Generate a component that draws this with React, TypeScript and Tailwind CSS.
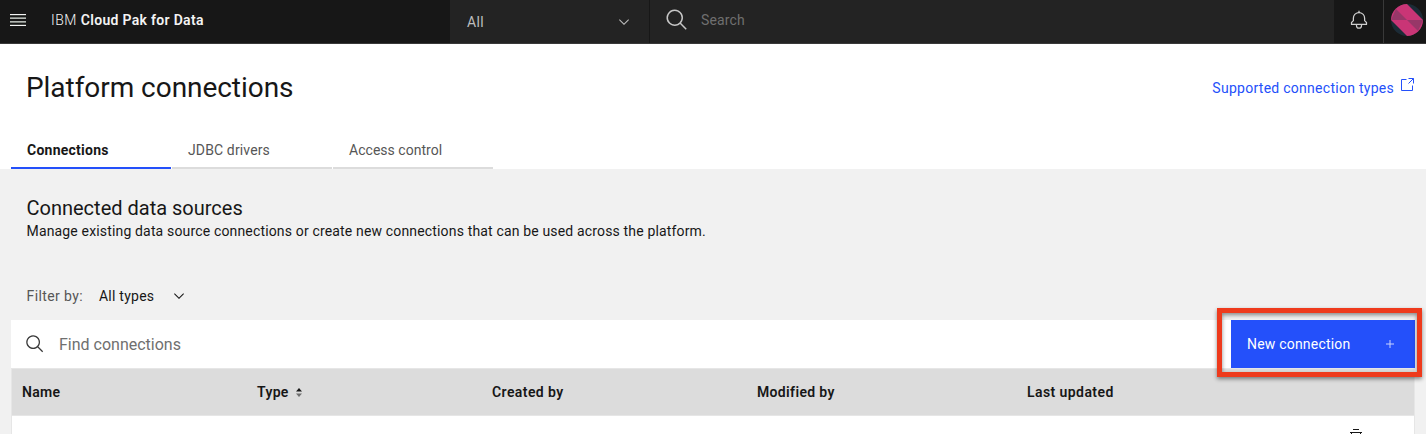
import React from 'react';

function SearchIcon({ className }: { className?: string }) {
  return (
    <svg viewBox="0 0 32 32" fill="currentColor" className={className}>
      <path d="M29 27.586l-7.552-7.552a11.018 11.018 0 1 0-1.414 1.414L27.586 29zM4 13a9 9 0 1 1 9 9 9.01 9.01 0 0 1-9-9z" />
    </svg>
  );
}

function ChevronDown({ className }: { className?: string }) {
  return (
    <svg viewBox="0 0 16 16" fill="currentColor" className={className}>
      <path d="M8 11L3 6l.7-.7L8 9.6l4.3-4.3.7.7z" />
    </svg>
  );
}

function Header() {
  return (
    <header className="flex h-11 shrink-0 border-b border-[#393939] bg-[#171717] text-[14px] leading-5">
      <div className="flex w-[450px] shrink-0 items-center pb-[3px] pl-[10px]">
        <svg viewBox="0 0 16 12" className="h-3 w-4" shapeRendering="crispEdges">
          <path d="M0 0h16v1H0zM0 11h16v1H0z" fill="#f3f3f3" />
          <path d="M0 4h16v1H0zM0 7h16v1H0z" fill="#b4b8b4" />
          <path d="M0 3h16v1H0zM0 8h16v1H0z" fill="#7c817c" />
          <path d="M0 1h16v1H0zM0 10h16v1H0z" fill="#3c3f3c" />
        </svg>
        <span className="ml-[25px] whitespace-nowrap text-[#f3f3f3]">
          <span className="font-light tracking-[0.5px]">IBM </span>
          <span className="font-semibold tracking-[0.3px]">Cloud Pak for Data</span>
        </span>
      </div>
      <div className="flex w-[200px] shrink-0 items-center justify-between border-r border-[#171717] bg-[#232323] pl-[17px] pr-[17px] text-[#bebebe]">
        <span className="tracking-[0.4px]">All</span>
        <ChevronDown className="h-4 w-4" />
      </div>
      <div className="flex flex-1 items-center bg-[#232323] pb-[3px] pl-[15px]">
        <SearchIcon className="h-6 w-6 text-[#c6c6c6]" />
        <span className="ml-[12px] tracking-[0.16px] text-[#6f6f6f]">Search</span>
      </div>
      <div className="flex w-[49px] shrink-0 items-center justify-center pb-[3px]">
        <svg viewBox="0 0 32 32" fill="#d0d0d0" className="h-5 w-5">
          <path d="M28.7 19.3L26 16.6V13a10 10 0 0 0-9-9.95V1h-2v2.05A10 10 0 0 0 6 13v3.6l-2.7 2.7A1 1 0 0 0 3 20v3a1 1 0 0 0 1 1h7v1a5 5 0 0 0 10 0v-1h7a1 1 0 0 0 1-1v-3a1 1 0 0 0-.3-.7zM19 25a3 3 0 0 1-6 0v-1h6zm8-3H5v-1.6l2.7-2.7A1 1 0 0 0 8 17v-4a8 8 0 0 1 16 0v4a1 1 0 0 0 .3.7l2.7 2.7z" />
        </svg>
      </div>
      <div className="flex w-[43px] shrink-0 border-l border-[#393939] pl-[7px] pt-1">
        <svg viewBox="0 0 32 32" className="h-8 w-8 shrink-0">
          <clipPath id="avatar-clip">
            <circle cx="16" cy="16" r="16" />
          </clipPath>
          <g clipPath="url(#avatar-clip)">
            <path d="M0 0h32v32H0z" fill="#1c2b36" />
            <path d="M0 0h16l16 16v16H16L0 16z" fill="#c93576" />
            <path d="M0 16L5 5l11 11z" fill="#973768" />
            <path d="M32 16L27 27 16 16z" fill="#973768" />
          </g>
        </svg>
      </div>
    </header>
  );
}

function Tab({ label, className }: { label: string; className: string }) {
  return (
    <div className={'flex h-[38px] w-[160px] items-center border-b-2 pl-4 pt-[2px] text-[14px] ' + className}>
      {label}
    </div>
  );
}

function TableHead() {
  return (
    <div className="flex h-12 shrink-0 items-center border-y border-[#e6e6e6] bg-[#dcdcdc] pl-[10px] text-[14px] font-semibold text-[#171717]">
      <span className="w-[235px] tracking-[0.3px]">Name</span>
      <span className="flex w-[235px] items-center gap-[7px] tracking-[0.3px]">
        Type
        <svg viewBox="0 0 6 9" className="h-[9px] w-1.5">
          <path d="M0 3.5L3 0l3 3.5z" fill="#171717" />
          <path d="M0 5.5h6L3 9z" fill="#6f6f6f" />
        </svg>
      </span>
      <span className="w-[265px] tracking-[0.42px]">Created by</span>
      <span className="w-[270px] tracking-[0.35px]">Modified by</span>
      <span className="tracking-[0.42px]">Last updated</span>
    </div>
  );
}

export default function App() {
  return (
    <div className="relative flex h-[434px] w-[1426px] flex-col overflow-hidden bg-white font-['Roboto',sans-serif] text-[#171717]">
      <Header />
      <div className="flex h-[87px] shrink-0 items-center justify-between pl-[26px] pr-[12px]">
        <h1 className="text-[28px] leading-9 tracking-[-0.05px]">Platform connections</h1>
        <a className="flex items-center pt-[2px] text-[14px] tracking-[0.27px] text-[#2450fa]">
          Supported connection types
          <svg viewBox="0 0 14 14" fill="none" stroke="currentColor" className="mb-[7px] ml-1.5 h-3.5 w-3.5">
            <path d="M6.5 1.5h-5v11h11v-5M8.5 .5h5v5M13.5 .5l-5 5" />
          </svg>
        </a>
      </div>
      <div className="flex h-[38px] shrink-0 gap-px pl-[11px]">
        <Tab label="Connections" className="border-[#2450fa] font-bold tracking-[0.25px] text-[#171717]" />
        <Tab label="JDBC drivers" className="border-[#dcdcdc] tracking-[0.13px] text-[#565656]" />
        <Tab label="Access control" className="border-[#dcdcdc] tracking-[0.03px] text-[#565656]" />
      </div>
      <main className="flex min-h-0 flex-1 flex-col bg-[#f1f1f1] px-[11px]">
        <div className="flex h-[151px] shrink-0 flex-col pl-[15.5px] pt-[26px]">
          <h2 className="text-[20px] leading-[26px]">Connected data sources</h2>
          <p className="text-[14px] leading-5 tracking-[0.16px]">
            Manage existing data source connections or create new connections that can be used across the platform.
          </p>
          <div className="mt-[45px] flex items-center text-[14px] leading-5">
            <span className="w-[72.5px] tracking-[0.4px] text-[#565656]">Filter by:</span>
            <span className="w-[72px] tracking-[0.24px]">All types</span>
            <ChevronDown className="h-4 w-4" />
          </div>
        </div>
        <div className="flex h-12 shrink-0 bg-white">
          <div className="flex flex-1 items-center pl-3.5">
            <SearchIcon className="h-5 w-5 text-[#393939]" />
            <span className="ml-[14px] pt-px text-[16px] text-[#6f6f6f]">Find connections</span>
          </div>
          <button className="flex w-[184px] items-center justify-between bg-[#2450fa] pl-4 pr-[21px] text-[14px] tracking-[0.2px] text-white">
            New connection
            <svg viewBox="0 0 8 8" className="h-2 w-2" stroke="#c8d3fe">
              <path d="M4 0v8M0 4h8" />
            </svg>
          </button>
        </div>
        <div className="flex min-h-0 flex-1 flex-col border-x border-[#e6e6e6] bg-white">
          <TableHead />
          <div className="flex justify-end pr-[52px] pt-[13px]">
            <svg viewBox="0 0 12 14" className="h-3.5 w-3" shapeRendering="crispEdges">
              <path d="M3 0h6v1H3zM0 3h12v1H0zM1 4h1v10H1zM10 4h1v10h-1z" fill="#171717" />
            </svg>
          </div>
        </div>
      </main>
      <div className="absolute left-[1217px] top-[308px] h-[69px] w-[205px] border-[5px] border-[#ee3a1c] shadow-[0_2px_4px_rgba(0,0,0,0.45),inset_0_2px_4px_rgba(0,0,0,0.45)]" />
    </div>
  );
}
